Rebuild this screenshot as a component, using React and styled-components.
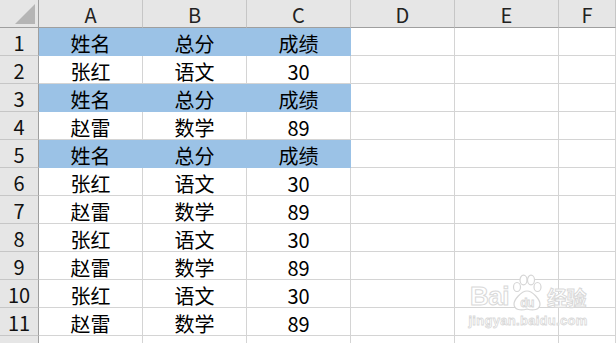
import styled, { createGlobalStyle } from 'styled-components';

const GlobalStyle = createGlobalStyle`
    html, body {
        margin: 0;
        padding: 0;
        background: #fff;
        overflow: hidden;
    }
    body {
        font-family: 'Noto Sans CJK SC', 'Microsoft YaHei', sans-serif;
    }
`;

const Page = styled.div`
    position: relative;
    width: 616px;
    height: 343px;
    overflow: hidden;
`;

const Sheet = styled.div`
    display: grid;
    grid-template-columns: 39px repeat(5, 104px) 1fr;
    grid-auto-rows: 28px;
`;

const Corner = styled.div`
    box-sizing: border-box;
    background: #e6e6e6;
    border-right: 1px solid #9f9f9f;
    border-bottom: 1px solid #9f9f9f;
    position: relative;
    &::after {
        content: '';
        position: absolute;
        right: 3px;
        bottom: 3px;
        width: 0;
        height: 0;
        border-left: 20px solid transparent;
        border-bottom: 20px solid #b5b5b5;
    }
`;

const ColHead = styled.div`
    box-sizing: border-box;
    background: #e6e6e6;
    border-right: 1px solid #c6c6c6;
    border-bottom: 1px solid #9f9f9f;
    display: flex;
    align-items: center;
    justify-content: center;
    padding-top: 1px;
    font-size: 20px;
    color: #222;
`;

const RowHead = styled.div`
    box-sizing: border-box;
    background: #e6e6e6;
    border-right: 1px solid #9f9f9f;
    border-bottom: 1px solid #c6c6c6;
    display: flex;
    align-items: center;
    justify-content: center;
    padding-top: 2px;
    font-size: 20px;
    color: #111;
`;

const Cell = styled.div`
    box-sizing: border-box;
    background: ${(p) => (p.$fill ? '#9bc2e6' : '#fff')};
    border-right: 1px solid ${(p) => (p.$fill ? '#9bc2e6' : '#d4d4d4')};
    border-bottom: 1px solid ${(p) => (p.$fill ? '#9bc2e6' : '#d4d4d4')};
    display: flex;
    align-items: center;
    justify-content: center;
    padding-top: 3px;
    font-size: 20px;
    color: #000;
    white-space: nowrap;
`;

const Watermark = styled.div`
    position: absolute;
    left: 470px;
    top: 274px;
    width: 116px;
    display: flex;
    flex-direction: column;
    align-items: center;
    font-family: 'Liberation Sans', Arial, sans-serif;
    color: #fff;
    -webkit-text-stroke: 1px #d9d9d9;
    pointer-events: none;
`;

const MarkLine = styled.div`
    display: flex;
    align-items: flex-end;
    font-size: 26px;
    font-weight: 700;
    line-height: 1;
    letter-spacing: -0.5px;
`;

const MarkCn = styled.span`
    font-family: 'Noto Sans CJK SC', sans-serif;
    font-size: 20px;
    margin-left: 2px;
    margin-bottom: 1px;
`;

const MarkUrl = styled.div`
    margin-top: 4px;
    font-size: 13px;
    font-weight: 700;
    letter-spacing: 0.3px;
    -webkit-text-stroke: 0.8px #d9d9d9;
`;

const Paw = () => (
    <svg width="36" height="38" viewBox="0 0 36 38" fill="#fff" stroke="#d6d6d6" strokeWidth="1.2" style={{ marginBottom: -3 }}>
        <ellipse cx="8" cy="13" rx="3.5" ry="4.5" />
        <ellipse cx="14.5" cy="6" rx="3.5" ry="4.8" />
        <ellipse cx="22" cy="6" rx="3.5" ry="4.8" />
        <ellipse cx="28.5" cy="13" rx="3.5" ry="4.5" />
        <path d="M18 17 C12 17 5 26 5 30 C5 36 12 37 18 35 C24 37 31 36 31 30 C31 26 24 17 18 17 Z" />
        <text x="18" y="33" textAnchor="middle" fontSize="12" fontWeight="700" fontFamily="Liberation Sans, sans-serif" fill="#fff" stroke="#d6d6d6" strokeWidth="0.8">du</text>
    </svg>
);

const columns = ['A', 'B', 'C', 'D', 'E', 'F'];

const header = ['姓名', '总分', '成绩'];
const zhang = ['张红', '语文', '30'];
const zhao = ['赵雷', '数学', '89'];

const rows = [
    { data: header, fill: true },
    { data: zhang },
    { data: header, fill: true },
    { data: zhao },
    { data: header, fill: true },
    { data: zhang },
    { data: zhao },
    { data: zhang },
    { data: zhao },
    { data: zhang },
    { data: zhao },
    { data: [], hidden: true },
];

const App = () => {
    return (
        <Page>
            <GlobalStyle />
            <Sheet>
                <Corner />
                {columns.map((c) => (
                    <ColHead key={c}>{c}</ColHead>
                ))}
                {rows.map((row, i) => [
                    <RowHead key={`h${i}`}>{row.hidden ? '' : i + 1}</RowHead>,
                    ...columns.map((c, j) => (
                        <Cell key={`${i}${c}`} $fill={row.fill && j < 3}>
                            {row.data[j] || ''}
                        </Cell>
                    )),
                ])}
            </Sheet>
            <Watermark>
                <MarkLine>
                    Bai
                    <Paw />
                    <MarkCn>经验</MarkCn>
                </MarkLine>
                <MarkUrl>jingyan.baidu.com</MarkUrl>
            </Watermark>
        </Page>
    );
};

export default App;
